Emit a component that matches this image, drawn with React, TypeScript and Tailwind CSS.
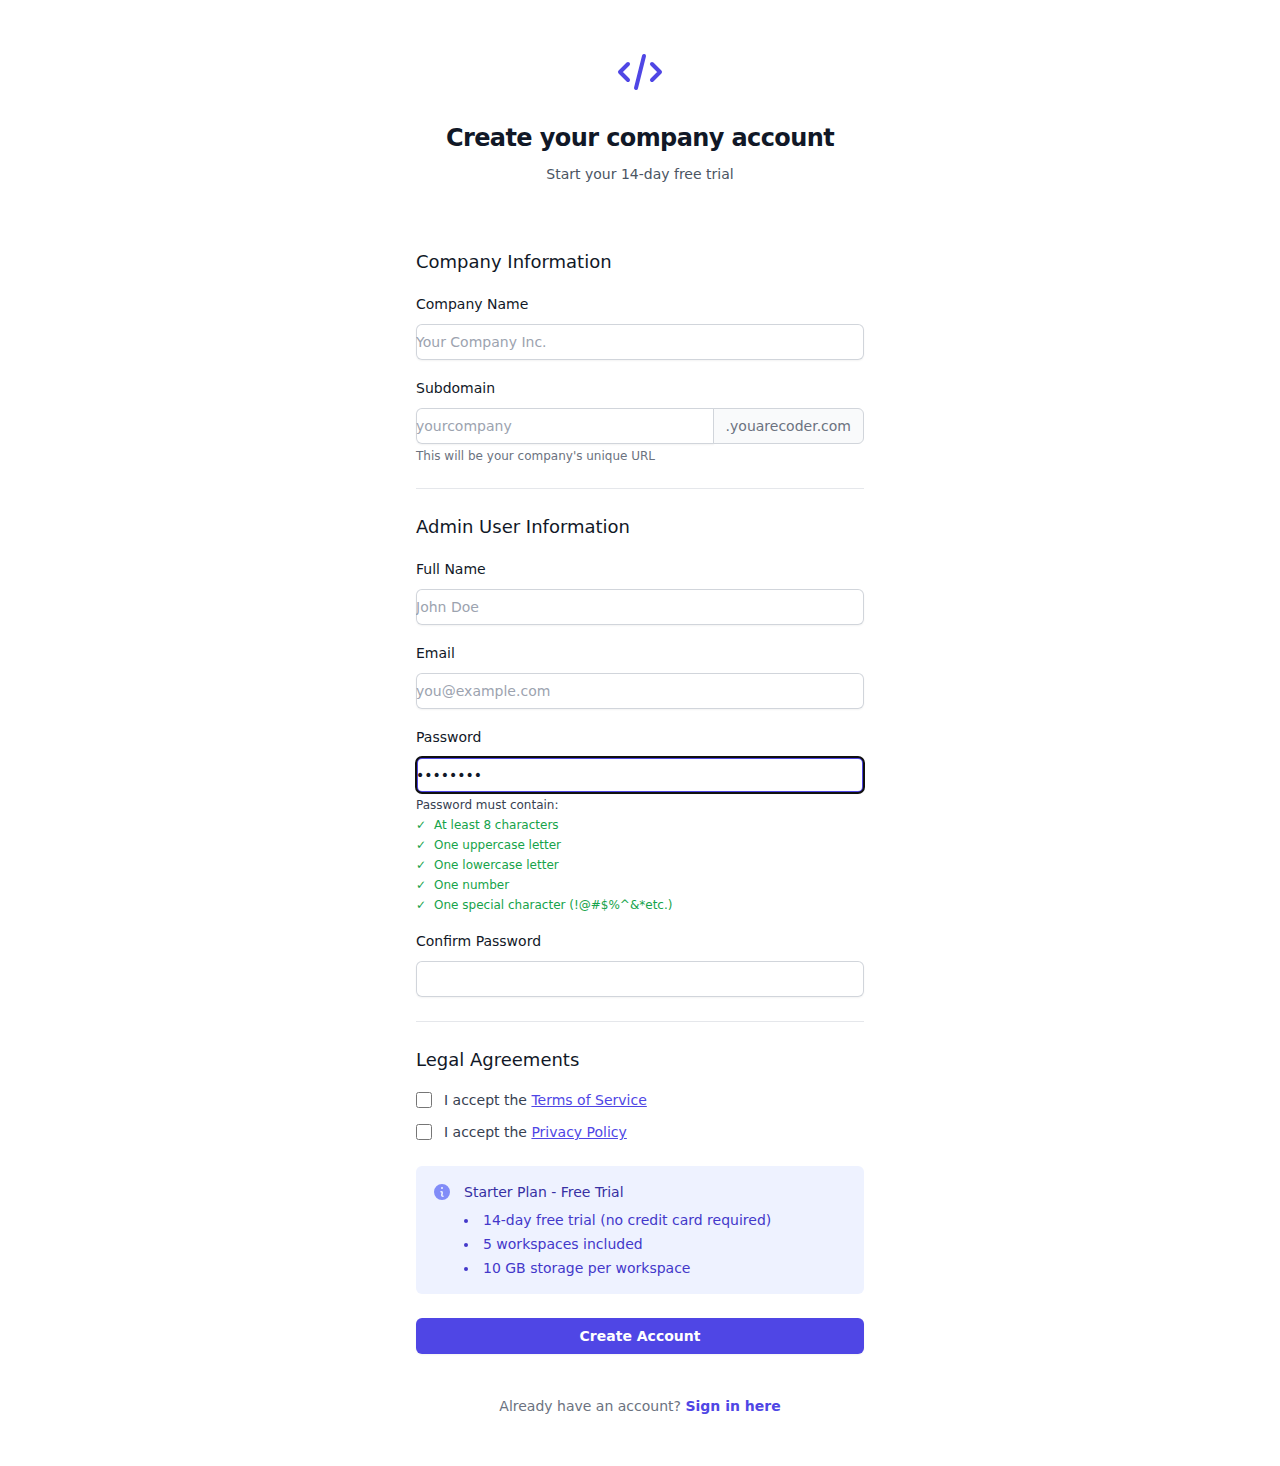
import React from "react";

const inputClass =
  "block w-full rounded-md bg-white py-1.5 px-0 text-sm leading-6 text-[#111827] shadow-xs ring-1 ring-inset ring-[#d1d5db] placeholder:text-[#9ca3af] h-9 outline-none";
const labelClass = "block text-sm font-medium leading-6 text-[#111827]";

function Field({ label, placeholder }: { label: string; placeholder?: string }) {
  return (
    <div>
      <label className={labelClass}>{label}</label>
      <div className="mt-2">
        <input className={inputClass} placeholder={placeholder} />
      </div>
    </div>
  );
}

function Agreement({ name }: { name: string }) {
  return (
    <div className="flex h-5 items-center">
      <input type="checkbox" className="h-4 w-4" />
      <span className="ml-3 text-sm text-[#374151]">
        I accept the <a className="text-[#4f46e5] underline">{name}</a>
      </span>
    </div>
  );
}

const rules = [
  "At least 8 characters",
  "One uppercase letter",
  "One lowercase letter",
  "One number",
  "One special character (!@#$%^&*etc.)",
];

export default function App() {
  return (
    <div className="min-h-[1466px] bg-white pt-12 font-['DejaVu_Sans',sans-serif]">
      <div className="mx-auto w-[448px]">
        <svg className="mx-auto h-12 w-12 text-[#4f46e5]" viewBox="0 0 24 24" fill="none" stroke="currentColor" strokeWidth="2" strokeLinecap="round" strokeLinejoin="round">
          <path d="M10 20l4-16m4 4l4 4-4 4M6 16l-4-4 4-4" />
        </svg>
        <h2 className="mt-6 text-center text-2xl font-bold leading-9 tracking-tight text-[#111827]">Create your company account</h2>
        <p className="mt-2 text-center text-sm text-[#4b5563]">Start your 14-day free trial</p>

        <section className="mt-16 border-b border-[#e5e7eb] pb-6">
          <h3 className="mb-4 text-lg font-medium leading-7 text-[#111827]">Company Information</h3>
          <Field label="Company Name" placeholder="Your Company Inc." />
          <div className="mt-4">
            <label className={labelClass}>Subdomain</label>
            <div className="mt-2 flex rounded-md">
              <input className="h-9 w-0 flex-1 rounded-l-md text-sm text-[#111827] shadow-xs outline-none ring-1 ring-inset ring-[#d1d5db] placeholder:text-[#9ca3af]" placeholder="yourcompany" />
              <span className="-ml-px flex items-center rounded-r-md border border-[#d1d5db] bg-[#f9fafb] px-3 text-sm text-[#6b7280]">.youarecoder.com</span>
            </div>
            <p className="mt-1 text-xs text-[#6b7280]">This will be your company's unique URL</p>
          </div>
        </section>

        <section className="mt-6 border-b border-[#e5e7eb] pb-6">
          <h3 className="mb-4 text-lg font-medium leading-7 text-[#111827]">Admin User Information</h3>
          <div className="space-y-4">
            <Field label="Full Name" placeholder="John Doe" />
            <Field label="Email" placeholder="you@example.com" />
            <div>
              <label className={labelClass}>Password</label>
              <input type="password" defaultValue="Abcdef1!" className="mt-2 block h-9 w-full rounded-md text-sm text-[#111827] shadow-xs outline-2 outline-[#101010] ring-2 ring-inset ring-[#4f46e5] -outline-offset-1" />
              <p className="mt-1 text-xs text-[#374151]">Password must contain:</p>
              <ul className="mt-1 space-y-1 text-xs text-[#16a34a]">
                {rules.map((rule) => (
                  <li key={rule} className="flex items-center"><span className="mr-2">✓</span>{rule}</li>
                ))}
              </ul>
            </div>
            <Field label="Confirm Password" />
          </div>
        </section>

        <section className="mt-6">
          <h3 className="mb-4 text-lg font-medium leading-7 text-[#111827]">Legal Agreements</h3>
          <div className="space-y-3">
            <Agreement name="Terms of Service" />
            <Agreement name="Privacy Policy" />
          </div>
        </section>

        <div className="mt-6 flex h-32 rounded-md bg-[#eef2ff] p-4">
          <svg className="h-5 w-5 shrink-0 text-[#818cf8]" viewBox="0 0 20 20" fill="currentColor">
            <path fillRule="evenodd" clipRule="evenodd" d="M18 10a8 8 0 11-16 0 8 8 0 0116 0zm-7-4a1 1 0 11-2 0 1 1 0 012 0zM9 9a.75.75 0 000 1.5h.253a.25.25 0 01.244.304l-.459 2.066A1.75 1.75 0 0010.747 15H11a.75.75 0 000-1.5h-.253a.25.25 0 01-.244-.304l.459-2.066A1.75 1.75 0 009.253 9H9z" />
          </svg>
          <div className="ml-3 text-sm">
            <h3 className="font-medium text-[#3730a3]">Starter Plan - Free Trial</h3>
            <ul className="mt-2 list-inside list-disc space-y-1 text-[#4338ca]">
              <li>14-day free trial (no credit card required)</li>
              <li>5 workspaces included</li>
              <li>10 GB storage per workspace</li>
            </ul>
          </div>
        </div>

        <button className="mt-6 h-9 w-full rounded-md bg-[#4f46e5] text-sm font-semibold text-white shadow-xs">Create Account</button>
        <p className="mt-10 text-center text-sm leading-6 text-[#6b7280]">
          Already have an account? <a className="font-semibold text-[#4f46e5]">Sign in here</a>
        </p>
      </div>
    </div>
  );
}
